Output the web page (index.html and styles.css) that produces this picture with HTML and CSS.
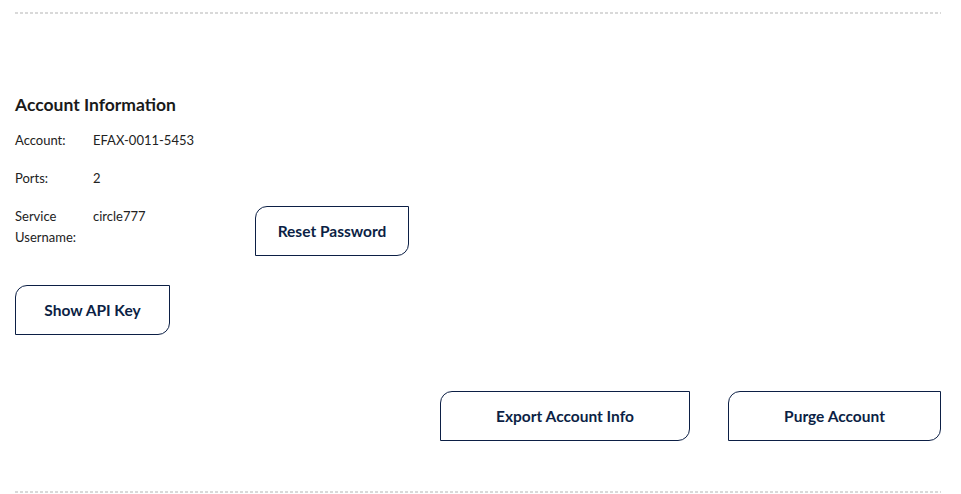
FILE: index.html
```html
<!DOCTYPE html>
<html lang="en">
<head>
  <meta charset="UTF-8" />
  <meta name="viewport" content="width=device-width, initial-scale=1.0"/>
  <title>Account Information</title>
  <link rel="stylesheet" href="styles.css">
</head>
<body>
  <div class="page">
    <hr class="divider">
    <section class="account">
      <h2>Account Information</h2>
      <div class="info-row">
        <span class="label">Account:</span>
        <span class="value">EFAX-0011-5453</span>
      </div>
      <div class="info-row">
        <span class="label">Ports:</span>
        <span class="value">2</span>
      </div>
      <div class="info-row">
        <span class="label">Service Username:</span>
        <span class="value">circle777</span>
        <button class="btn btn-reset">Reset Password</button>
      </div>
      <button class="btn btn-api">Show API Key</button>
      <div class="actions">
        <button class="btn btn-export">Export Account Info</button>
        <button class="btn btn-purge">Purge Account</button>
      </div>
    </section>
    <hr class="divider">
  </div>
</body>
</html>
```

FILE: styles.css
```css
body {
  margin: 0;
  font-family: Lato, 'Liberation Sans', sans-serif;
  background-color: #ffffff;
  color: #222222;
}
.page {
  padding: 12px 20px 0 15px;
}
.divider {
  margin: 0;
  border: none;
  height: 2px;
  background-image: repeating-linear-gradient(to right, #d9d9d9 0 3px, transparent 3px 5px);
}
.account {
  padding-top: 80px;
  padding-bottom: 50px;
}
h2 {
  margin: 0 0 14px;
  font-size: 17.5px;
  line-height: 22px;
  font-weight: 700;
  color: #1a1a1a;
}
.info-row {
  display: flex;
  align-items: flex-start;
  font-size: 13px;
  line-height: 21px;
  margin-bottom: 17px;
}
.label {
  width: 78px;
  padding-right: 10px;
  box-sizing: border-box;
}
.value {
  width: 162px;
}
.btn {
  height: 50px;
  padding: 0;
  font-family: inherit;
  font-size: 15.5px;
  font-weight: 700;
  color: #0c1f45;
  background-color: #ffffff;
  border: 1px solid #0c1f45;
  border-radius: 12px 0 12px 0;
  cursor: pointer;
}
.btn-reset {
  width: 154px;
}
.btn-api {
  display: block;
  width: 155px;
  margin-top: 29px;
}
.btn-export {
  width: 250px;
}
.btn-purge {
  width: 213px;
}
.actions {
  display: flex;
  justify-content: flex-end;
  gap: 38px;
  margin-top: 56px;
}
```
